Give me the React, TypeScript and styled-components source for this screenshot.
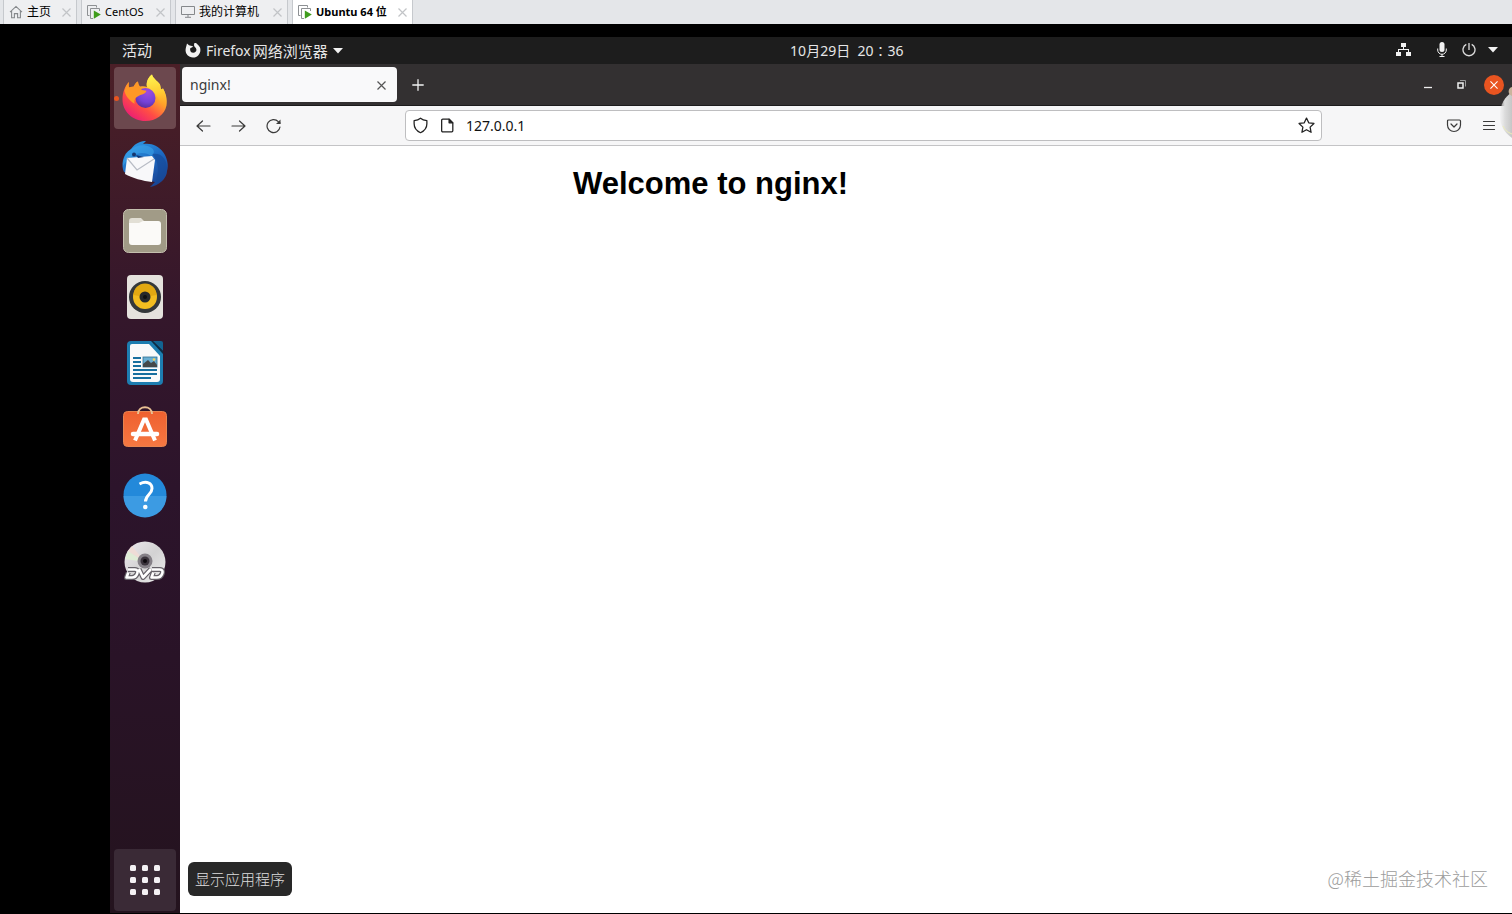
import React from "react";
import styled, { createGlobalStyle } from "styled-components";

const ui = `"Noto Sans", "Noto Sans CJK SC", sans-serif`;

const GlobalStyle = createGlobalStyle`
  *, *::before, *::after { box-sizing: border-box; }
  html, body, #root { height: 100%; }
  body { margin: 0; background: #000; font-family: ${ui}; overflow: hidden; }
  button { border: 0; padding: 0; margin: 0; background: none; font: inherit; color: inherit; }
  svg { display: block; flex: none; }
  h1 { margin: 0; }
`;

const Screen = styled.div`
  display: flex;
  flex-direction: column;
  height: 100vh;
  background: #000;
`;

/* Virtual machine tabs */
const HostTabs = styled.nav`
  display: flex;
  gap: 4px;
  height: 24px;
  padding-left: 3px;
  background: #e4e6e9;
  flex: none;
`;

const HostTab = styled.div<{ $active?: boolean }>`
  display: flex;
  align-items: center;
  height: 24px;
  padding: 0 5px;
  border: solid #c6c9cd;
  border-width: 0 1px;
  background: ${(p) => (p.$active ? "#fff" : "#eeeff1")};
`;

const HostTabLabel = styled.button<{ $active?: boolean; $width: number; $cjk?: boolean }>`
  display: flex;
  align-items: center;
  gap: 4px;
  width: ${(p) => p.$width}px;
  white-space: nowrap;
  font-size: ${(p) => (p.$cjk ? 12 : 11)}px;
  font-weight: ${(p) => (p.$active ? 700 : 400)};
  line-height: 16px;
  color: #000;
`;

const Guest = styled.div`
  display: flex;
  flex-direction: column;
  flex: 1;
  min-height: 0;
  margin: 13px 0 1px 110px;
`;

/* Desktop top bar */
const TopBar = styled.header`
  display: grid;
  grid-template-columns: 19fr auto 17fr;
  align-items: center;
  height: 27px;
  flex: none;
  background: #1d1d1d;
  color: #e6e6e6;
  font-size: 14px;
  line-height: 20px;
`;

const TopLeft = styled.div`
  display: flex;
  align-items: center;
  gap: 32px;
  padding-left: 12px;
`;

const CjkLabel = styled.span`
  font-size: 15px;
`;

const AppMenu = styled.button`
  display: flex;
  align-items: center;
  gap: 5px;
  white-space: nowrap;
`;

const AppName = styled.span`
  display: flex;
  gap: 2px;
`;

const Clock = styled.button`
  white-space: pre;
`;

const Tray = styled.div`
  display: flex;
  align-items: center;
  justify-content: flex-end;
  padding: 0 14px 2px 0;
`;

const TrayButton = styled.button<{ $space: number }>`
  margin-left: ${(p) => p.$space}px;
`;

const Desktop = styled.div`
  display: flex;
  flex: 1;
  min-height: 0;
`;

/* Dock */
const Dock = styled.aside`
  position: relative;
  display: flex;
  flex-direction: column;
  gap: 4px;
  width: 70px;
  flex: none;
  padding: 3px 4px 2px;
  background: linear-gradient(#4b1f27 0%, #421c28 12%, #35172b 28%, #2c142b 50%, #291327 70%, #24131e 100%);
`;

const DockItem = styled.button<{ $tone?: "active" | "apps" }>`
  position: relative;
  display: grid;
  place-items: center;
  width: 62px;
  height: 62px;
  flex: none;
  border-radius: 4px;
  background: ${(p) => (p.$tone === "active" ? "#6c484e" : p.$tone === "apps" ? "#3a2a36" : "transparent")};
  &:last-of-type { margin-top: auto; }
  svg { overflow: visible; }
`;

const RunningDot = styled.span`
  position: absolute;
  left: 0;
  top: 29px;
  width: 5px;
  height: 5px;
  border-radius: 3px;
  background: #e95420;
`;

const Tooltip = styled.div`
  position: absolute;
  left: 78px;
  bottom: 17px;
  z-index: 2;
  padding: 7px;
  border-radius: 6px;
  background: #282828;
  color: #dedede;
  font-family: "Noto Sans CJK SC", sans-serif;
  font-weight: 300;
  font-size: 15px;
  line-height: 20px;
  white-space: nowrap;
`;

/* Browser */
const Browser = styled.main`
  position: relative;
  display: flex;
  flex-direction: column;
  flex: 1;
  min-width: 0;
  background: #fff;
`;

const TabStrip = styled.div`
  display: flex;
  align-items: center;
  height: 42px;
  flex: none;
  padding: 0 8px 0 2px;
  background: #333031;
  border-bottom: 1px solid #1c1b1c;
  color: #f2f2f2;
`;

const BrowserTab = styled.div`
  display: flex;
  align-items: center;
  justify-content: space-between;
  width: 215px;
  height: 35px;
  padding: 1px 11px 0 8px;
  border-radius: 4px;
  background: #f9f9fa;
  color: #3b3b3b;
  font-size: 14px;
  line-height: 20px;
`;

const NewTab = styled.button`
  margin-left: 15px;
`;

const WindowControls = styled.div`
  display: flex;
  align-items: center;
  gap: 13px;
  margin-left: auto;
`;

const WindowButton = styled.button<{ $close?: boolean }>`
  display: grid;
  place-items: center;
  width: 20px;
  height: 20px;
  border-radius: 10px;
  background: ${(p) => (p.$close ? "#e95420" : "transparent")};
`;

const Toolbar = styled.div`
  display: grid;
  grid-template-columns: 225px minmax(0, 1fr) 190px;
  align-items: center;
  height: 40px;
  flex: none;
  background: #f6f6f7;
  border-bottom: 1px solid #c4c4c6;
  color: #3a3a3a;
`;

const NavButtons = styled.div`
  display: flex;
  gap: 19px;
  padding-left: 16px;
`;

const AddressBar = styled.div`
  display: flex;
  align-items: center;
  height: 31px;
  padding: 0 6px;
  border: 1px solid #bebec0;
  border-radius: 4px;
  background: #fff;
  color: #222;
`;

const SiteButton = styled.button`
  margin-right: 10px;
`;

const AddressInput = styled.input`
  flex: 1;
  min-width: 0;
  height: 26px;
  padding: 0;
  border: 0;
  outline: 0;
  background: transparent;
  color: #111;
  font-family: ${ui};
  font-size: 14px;
  line-height: 20px;
`;

const ToolbarRight = styled.div`
  display: flex;
  justify-content: flex-end;
  gap: 19px;
  padding-right: 15px;
`;

const Page = styled.section`
  flex: 1;
  padding: 20px 0 0 14px;
  background: #fff;
`;

const PageBody = styled.div`
  max-width: 560px;
  margin: 0 auto;
`;

const PageTitle = styled.h1`
  font-family: "Liberation Sans", Arial, sans-serif;
  font-size: 31px;
  line-height: 36px;
  font-weight: 700;
  color: #000;
`;

const Watermark = styled.div`
  position: absolute;
  right: 24px;
  bottom: 22px;
  color: #9c9c9c;
  font-family: "Noto Sans CJK SC", sans-serif;
  font-size: 18px;
  line-height: 26px;
  font-weight: 300;
  white-space: nowrap;
`;

const Bubble = styled.div`
  position: absolute;
  top: 20px;
  right: 0;
  z-index: 3;
`;

const CloseMark = ({ color = "#c2c4c7", size = 9 }: { color?: string; size?: number }) => (
  <svg width={size} height={size} viewBox="0 0 9 9" fill="none" stroke={color} strokeWidth="1.2">
    <path d="M.5.5l8 8M8.5.5l-8 8" />
  </svg>
);

const HomeIcon = () => (
  <svg width="14" height="14" viewBox="0 0 14 14" fill="none" stroke="#85888b" strokeWidth="1.1">
    <path d="M1 7.2L7 1.4l6 5.8M2.6 6v6.8h2.8V8.6h3.2v4.2h2.8V6" />
  </svg>
);

const MachineIcon = () => (
  <svg width="14" height="14" viewBox="0 0 14 14" fill="none">
    <path d="M2.5 10.5h-2V.5h9v2" stroke="#8d9093" />
    <path d="M6 13.5H3.5v-10h9V6" stroke="#8d9093" />
    <path d="M6.8 5.4v8.4l7-4.2z" fill="#3f9c1c" />
  </svg>
);

const ComputerIcon = () => (
  <svg width="14" height="12" viewBox="0 0 14 12" fill="none" stroke="#85888b">
    <path d="M.5.5h13v8H.5zM7 8.5v2.5M4 11.3h6" />
  </svg>
);

const FirefoxGlyph = () => (
  <svg width="17" height="16" viewBox="-1 1 17 16">
    <path
      fill="#f2f2f2"
      d="M2 1.500L4 3.200C5 3.400 6.500 3.600 8.200 4.600C7.500 5.600 6.300 5.800 5.300 6.200C4.600 8.500 6 10.800 8.200 10.800C10.400 10.800 11.600 9.200 11.400 7.400C11.200 5.600 9.600 5 9.200 4C8.800 2.400 9.200 1 10.400 0C11 1.600 14 3 15 5.500C16.600 10 13.500 15.500 8 15.500C3 15.500 .2 11.500 .6 7.600C.8 5.200 1.600 3.500 2 1.500z"
    />
  </svg>
);

const Caret = () => (
  <svg width="10" height="6" viewBox="0 0 10 6">
    <path d="M0 0h10L5 5.500z" fill="#f2f2f2" />
  </svg>
);

const NetworkIcon = () => (
  <svg width="15" height="13" viewBox="0 0 15 13" fill="#f2f2f2">
    <path d="M5 0h5v4H5zM0 9h5v4H0zM10 9h5v4h-5zM7 4h1v2h5v3h-1V7H3v2H2V6h5z" />
  </svg>
);

const MicIcon = () => (
  <svg width="10" height="15" viewBox="0 0 10 15">
    <rect x="2.500" width="5" height="10" rx="2.500" fill="#f2f2f2" />
    <path d="M.7 6.500v1.500a4.300 4.300 0 0 0 8.600 0V6.500M5 12v2.500M2.500 14.500h5" fill="none" stroke="#f2f2f2" />
  </svg>
);

const PowerIcon = () => (
  <svg width="14" height="14" viewBox="0 0 14 14" fill="none" stroke="#dcdcdc" strokeWidth="1.300">
    <path d="M4.300 1.400a6 6 0 1 0 5.400 0M7 0v7" />
  </svg>
);

const FirefoxLogo = () => (
  <svg width="46" height="48" viewBox="0 0 46 48">
    <defs>
      <linearGradient id="fx" x1=".85" y1=".1" x2=".2" y2="1">
        <stop offset="0" stopColor="#fff04a" />
        <stop offset=".35" stopColor="#ffa52a" />
        <stop offset=".65" stopColor="#ff4d45" />
        <stop offset="1" stopColor="#e8167c" />
      </linearGradient>
      <linearGradient id="fxTail" x1=".5" y1="0" x2=".6" y2="1">
        <stop offset="0" stopColor="#fff44f" />
        <stop offset=".5" stopColor="#ffca32" />
        <stop offset="1" stopColor="#ff8a1e" stopOpacity="0" />
      </linearGradient>
      <radialGradient id="fxGlobe" cx=".6" cy=".2" r=".85">
        <stop offset="0" stopColor="#a04be0" />
        <stop offset=".6" stopColor="#7542d8" />
        <stop offset="1" stopColor="#5a2c96" />
      </radialGradient>
    </defs>
    <path fill="url(#fx)" d="M7 8c-.5 2.500-.4 4 0 5.500 1.500-.7 3-.8 4.500-.7C13 10 14 8.500 16 7.500c0 2 1 4 2 5 3-.5 5-.3 7 .5-1.500-5 1.500-10 5-12.500 1 4 5 6 8 10l1 5 2-1c3 5 4.500 11 3.500 17C42.500 41 34 47 23.500 47 10 47 .5 37 .5 25.500 .5 18 3 12 7 8z" />
    <path fill="url(#fxTail)" d="M30 .5c1 4 5 6 8 10l1 5 2-1c4 7 4 17-.5 23-1-10-5-17-15.500-24.500-1-5 1.500-10 5-12.500z" />
    <circle cx="23.500" cy="24" r="10" fill="url(#fxGlobe)" />
    <path fill="#ff9826" d="M7 8c-.5 2.500-.4 4 0 5.500 1.500-.7 3-.8 4.500-.7C13 10 14 8.500 16 7.500c0 4 2 7 4 8.500l4.500.8c-1 3.500-5 3.500-7.500 5-4 1.500-5 4.500-4.300 8C8 27 4 23 2.500 17 3.500 13 5 10 7 8z" />
  </svg>
);

const ThunderbirdLogo = () => (
  <svg width="48" height="48" viewBox="0 -1 48 48">
    <defs>
      <linearGradient id="tb" x1=".2" y1="0" x2=".8" y2="1">
        <stop offset="0" stopColor="#2f9ce6" />
        <stop offset=".5" stopColor="#1d68c0" />
        <stop offset="1" stopColor="#1b3f8f" />
      </linearGradient>
    </defs>
    <path fill="url(#tb)" d="M10 8C15 1 21 0 25 0l-3 3c8-1.500 16 2 20 8 4 5 6 13 4 19 0 7-8 15-17 16l5-5-18-4L3 31C0 25 1 13 10 8z" />
    <path fill="#164a98" d="M31 13c7 7 8 20 2 31 8-3 13-10 13-17 0-9-6-16-15-14z" opacity=".65" />
    <path fill="#3fa9ee" d="M8 10c6-6 15-7 21-4 5 2 5 7 1 9-5-4-14-4-20 1-4 2-6 6-8 9 0-6 2-12 6-15z" opacity=".5" />
    <path fill="#f8f8fa" d="M6 17l25-2 3 4-3 22C22 40 11 37 4 33z" />
    <path fill="none" stroke="#b8bcc5" strokeWidth="1.200" d="M6 17l10 12 17-11" />
    <circle cx="13" cy="13.500" r="2" fill="#15366e" />
    <path d="M15 14l8 2-6 1z" fill="#123a7a" />
  </svg>
);

const FilesLogo = () => (
  <svg width="44" height="44" viewBox="0 -1 44 44">
    <rect x=".5" y=".5" width="43" height="43" rx="5" fill="#a19b87" stroke="#c4bfae" />
    <path d="M6 12a3 3 0 0 1 3-3h9l3 3h13a3 3 0 0 1 3 3v6H6z" fill="#e2dfd5" />
    <path d="M6 14h10l4-2h15a3 3 0 0 1 3 3v18a3 3 0 0 1-3 3H9a3 3 0 0 1-3-3z" fill="#fbfaf8" />
  </svg>
);

const SpeakerLogo = () => (
  <svg width="36" height="44" viewBox="0 -1 36 44">
    <rect width="36" height="44" rx="4" fill="#e5e2dd" />
    <circle cx="18" cy="22" r="16" fill="#34383a" />
    <circle cx="18" cy="22" r="12" fill="#f2bd20" />
    <path d="M6.500 20a11.500 11.500 0 0 1 23 0L18 22z" fill="#e2a912" />
    <circle cx="18" cy="22" r="5.500" fill="#25292b" />
    <circle cx="18" cy="22" r="2" fill="#0e1112" />
  </svg>
);

const WriterLogo = () => (
  <svg width="36" height="44" viewBox="0 -1 36 44">
    <path d="M4 0h22l10 11v29a4 4 0 0 1-4 4H4a4 4 0 0 1-4-4V4a4 4 0 0 1 4-4z" fill="#1d7db0" />
    <path d="M5 3h17l11 12v23a3 3 0 0 1-3 3H6a3 3 0 0 1-3-3V5a2 2 0 0 1 2-2z" fill="#fafafa" />
    <path d="M26 0h8a2 2 0 0 1 2 2v8z" fill="#126391" />
    <path d="M24 0h2l10 10v3z" fill="#0c2c44" />
    <path d="M6 17h8M6 21h8M6 25h8M6 29h24M6 33h24M6 37h18" stroke="#176f9f" strokeWidth="2" />
    <rect x="16" y="16" width="14" height="10" fill="#69afd3" stroke="#2f6f92" strokeWidth=".8" />
    <path d="M16 26v-3l5-4 3 3 3-2 3 4v2z" fill="#44494b" />
    <circle cx="27" cy="18.500" r="1.300" fill="#f5d25b" />
  </svg>
);

const SoftwareLogo = () => (
  <svg width="44" height="44" viewBox="0 1 44 44">
    <defs>
      <linearGradient id="sw" x1="0" y1="0" x2="0" y2="1">
        <stop offset="0" stopColor="#ef6030" />
        <stop offset="1" stopColor="#f57842" />
      </linearGradient>
    </defs>
    <rect x=".5" y="6.500" width="43" height="35" rx="4" fill="url(#sw)" stroke="#e7834f" />
    <path d="M15 9c0-9 14-9 14 0" fill="none" stroke="#e9c193" strokeWidth="2" />
    <path d="M12 35.500l9-21h2l9 21" fill="none" stroke="#fff" strokeWidth="4" />
    <path d="M10 29h24" stroke="#fff" strokeWidth="4.500" strokeLinecap="round" />
  </svg>
);

const HelpLogo = () => (
  <svg width="44" height="44" viewBox="0 -1 44 44">
    <circle cx="22" cy="22" r="21.500" fill="#2389da" />
    <path d="M.5 23h43a21.500 21.500 0 0 1-43 0z" fill="#3c9be3" />
    <path d="M16.500 11c7-3.500 12.500-1 12.500 4.500 0 6-6.500 6-6.500 13" fill="none" stroke="#fff" strokeWidth="3" />
    <circle cx="22.300" cy="34" r="2.300" fill="#fff" />
  </svg>
);

const DvdLogo = () => (
  <svg width="42" height="44" viewBox="0 -2 42 44">
    <defs>
      <linearGradient id="dvd" x1="0" y1="0" x2="1" y2="1">
        <stop offset="0" stopColor="#eeeaee" />
        <stop offset=".5" stopColor="#d3d2d3" />
        <stop offset="1" stopColor="#ededed" />
      </linearGradient>
    </defs>
    <circle cx="21" cy="22" r="20.500" fill="url(#dvd)" />
    <path d="M21 22L4 11l-3 8z" fill="#e0ecd6" />
    <path d="M21 22L4 11l4-5z" fill="#efdcd6" />
    <circle cx="21" cy="21" r="7.500" fill="#858087" />
    <circle cx="21" cy="21" r="4.500" fill="#3a333c" />
    <circle cx="21" cy="21" r="2" fill="#0c090d" />
    <g fill="none" strokeLinejoin="round">
      <path d="M4 29.500h7c5 0 2 8-3 8H2.500l1.800-5M15 29l4 8.500 8-8.500M28 29.500h8c5 0 2 8-3 8h-5.500l1.800-5" stroke="#656168" strokeWidth="5" />
      <path d="M4 29.500h7c5 0 2 8-3 8H2.500l1.800-5M15 29l4 8.500 8-8.500M28 29.500h8c5 0 2 8-3 8h-5.500l1.800-5" stroke="#fff" strokeWidth="2.600" />
    </g>
  </svg>
);

const AppsGrid = () => (
  <svg width="30" height="30" viewBox="0 0 30 30" fill="#f4f1f4">
    {[0, 12, 24].map((y) => [0, 12, 24].map((x) => <rect key={`${x}-${y}`} x={x} y={y} width="6" height="6" rx="1.500" />))}
  </svg>
);

const Stroke = ({ d, size = 16, width = 1.2, children }: { d?: string; size?: number; width?: number; children?: React.ReactNode }) => (
  <svg width={size} height={size} viewBox="0 0 16 16" fill="none" stroke="currentColor" strokeWidth={width} strokeLinecap="round" strokeLinejoin="round">
    {d && <path d={d} />}
    {children}
  </svg>
);

const hostTabs = [
  { name: "主页", width: 53, icon: <HomeIcon />, cjk: true },
  { name: "CentOS", width: 69, icon: <MachineIcon /> },
  { name: "我的计算机", width: 92, icon: <ComputerIcon />, cjk: true },
  { name: "Ubuntu 64 位", width: 100, icon: <MachineIcon />, active: true },
];

const dockApps = [
  { name: "Thunderbird", icon: <ThunderbirdLogo /> },
  { name: "Files", icon: <FilesLogo /> },
  { name: "Rhythmbox", icon: <SpeakerLogo /> },
  { name: "LibreOffice Writer", icon: <WriterLogo /> },
  { name: "Ubuntu Software", icon: <SoftwareLogo /> },
  { name: "Help", icon: <HelpLogo /> },
  { name: "DVD", icon: <DvdLogo /> },
];

export default function App() {
  return (
    <Screen>
      <GlobalStyle />
      <HostTabs>
        {hostTabs.map((t) => (
          <HostTab key={t.name} $active={t.active}>
            <HostTabLabel $active={t.active} $width={t.width} $cjk={t.cjk}>
              {t.icon}
              {t.name}
            </HostTabLabel>
            <button aria-label={`Close ${t.name}`}>
              <CloseMark />
            </button>
          </HostTab>
        ))}
      </HostTabs>
      <Guest>
        <TopBar>
          <TopLeft>
            <button><CjkLabel>活动</CjkLabel></button>
            <AppMenu>
              <FirefoxGlyph />
              <AppName>
                <span>Firefox</span> <CjkLabel>网络浏览器</CjkLabel>
              </AppName>
              <Caret />
            </AppMenu>
          </TopLeft>
          <Clock>10月29日  20∶36</Clock>
          <Tray>
            <TrayButton $space={0} aria-label="Network"><NetworkIcon /></TrayButton>
            <TrayButton $space={26} aria-label="Microphone"><MicIcon /></TrayButton>
            <TrayButton $space={15} aria-label="Power"><PowerIcon /></TrayButton>
            <TrayButton $space={12} aria-label="System menu"><Caret /></TrayButton>
          </Tray>
        </TopBar>
        <Desktop>
          <Dock>
            <DockItem $tone="active" aria-label="Firefox">
              <RunningDot />
              <FirefoxLogo />
            </DockItem>
            {dockApps.map((a) => (
              <DockItem key={a.name} aria-label={a.name}>{a.icon}</DockItem>
            ))}
            <DockItem $tone="apps" aria-label="显示应用程序"><AppsGrid /></DockItem>
            <Tooltip role="tooltip">显示应用程序</Tooltip>
          </Dock>
          <Browser>
            <TabStrip>
              <BrowserTab>
                <span>nginx!</span>
                <button aria-label="Close tab"><CloseMark color="#555" /></button>
              </BrowserTab>
              <NewTab aria-label="New tab">
                <Stroke size={12} width={1.7} d="M8 1v14M1 8h14" />
              </NewTab>
              <WindowControls>
                <WindowButton aria-label="Minimize">
                  <svg width="8" height="8" viewBox="0 0 8 8"><path d="M0 6.500h8" stroke="#eee" strokeWidth="1.300" /></svg>
                </WindowButton>
                <WindowButton aria-label="Restore">
                  <svg width="9" height="9" viewBox="0 0 9 9" fill="none">
                    <path d="M1 3h5v5H1z" stroke="#eee" strokeWidth="1.500" />
                    <path d="M3 .5h5.500v6" stroke="#999" />
                  </svg>
                </WindowButton>
                <WindowButton $close aria-label="Close window"><CloseMark color="#fff" size={8} /></WindowButton>
              </WindowControls>
            </TabStrip>
            <Toolbar>
              <NavButtons>
                <button aria-label="Back"><Stroke d="M14 8H1M6.500 3L1 8l5.500 5" /></button>
                <button aria-label="Forward"><Stroke d="M1 8h13M8.500 3L14 8l-5.500 5" /></button>
                <button aria-label="Reload">
                  <Stroke d="M14 9A6.500 6.500 0 1 1 12.300 3.600L14 5">
                    <path d="M14.500 1.500V6H10z" fill="currentColor" stroke="none" />
                  </Stroke>
                </button>
              </NavButtons>
              <AddressBar>
                <SiteButton aria-label="Tracking protection">
                  <Stroke size={17} d="M8 1.200c1.800 1.500 4 2 6 2.200v3c0 4-2.500 6.800-6 8.400-3.500-1.600-6-4.400-6-8.400v-3c2-.2 4.200-.7 6-2.200z" />
                </SiteButton>
                <SiteButton aria-label="Site information">
                  <Stroke size={17} d="M3.500 2h6L13 5.500V13a1 1 0 0 1-1 1H3.500a1 1 0 0 1-1-1V3a1 1 0 0 1 1-1z">
                    <path d="M9.500 2v3.500H13z" fill="currentColor" />
                  </Stroke>
                </SiteButton>
                <AddressInput aria-label="Address" defaultValue="127.0.0.1" />
                <button aria-label="Bookmark">
                  <Stroke size={17} d="M8 1l2.100 4.500 4.900.6-3.600 3.400.9 4.900L8 12l-4.300 2.400.9-4.900L1 6.100l4.900-.6z" />
                </button>
              </AddressBar>
              <ToolbarRight>
                <button aria-label="Pocket">
                  <Stroke d="M2.500 2h11a1 1 0 0 1 1 1v4a6.500 6.500 0 0 1-13 0V3a1 1 0 0 1 1-1zM5 6l3 3 3-3" />
                </button>
                <button aria-label="Menu"><Stroke d="M2.500 3.500h11M2.500 7.500h11M2.500 11.500h11" /></button>
              </ToolbarRight>
            </Toolbar>
            <Page>
              <PageBody>
                <PageTitle>Welcome to nginx!</PageTitle>
              </PageBody>
            </Page>
            <Bubble>
              <svg width="14" height="60" viewBox="0 0 14 60">
                <defs>
                  <linearGradient id="bubble" x1="0" x2="1" y1="0" y2="0">
                    <stop offset="0" stopColor="#e9e9e9" stopOpacity=".4" />
                    <stop offset=".4" stopColor="#dcdcdc" />
                    <stop offset="1" stopColor="#c6c6c6" />
                  </linearGradient>
                </defs>
                <path d="M14 8C7 13 2 20 2 31s4 17 12 23z" fill="url(#bubble)" />
                <path d="M14 3C10 4 9 10 14 12z" fill="#c9b49c" />
                <path d="M5 42c2 4 4 6 9 8" stroke="#eeeeb8" fill="none" />
              </svg>
            </Bubble>
            <Watermark>@稀土掘金技术社区</Watermark>
          </Browser>
        </Desktop>
      </Guest>
    </Screen>
  );
}
